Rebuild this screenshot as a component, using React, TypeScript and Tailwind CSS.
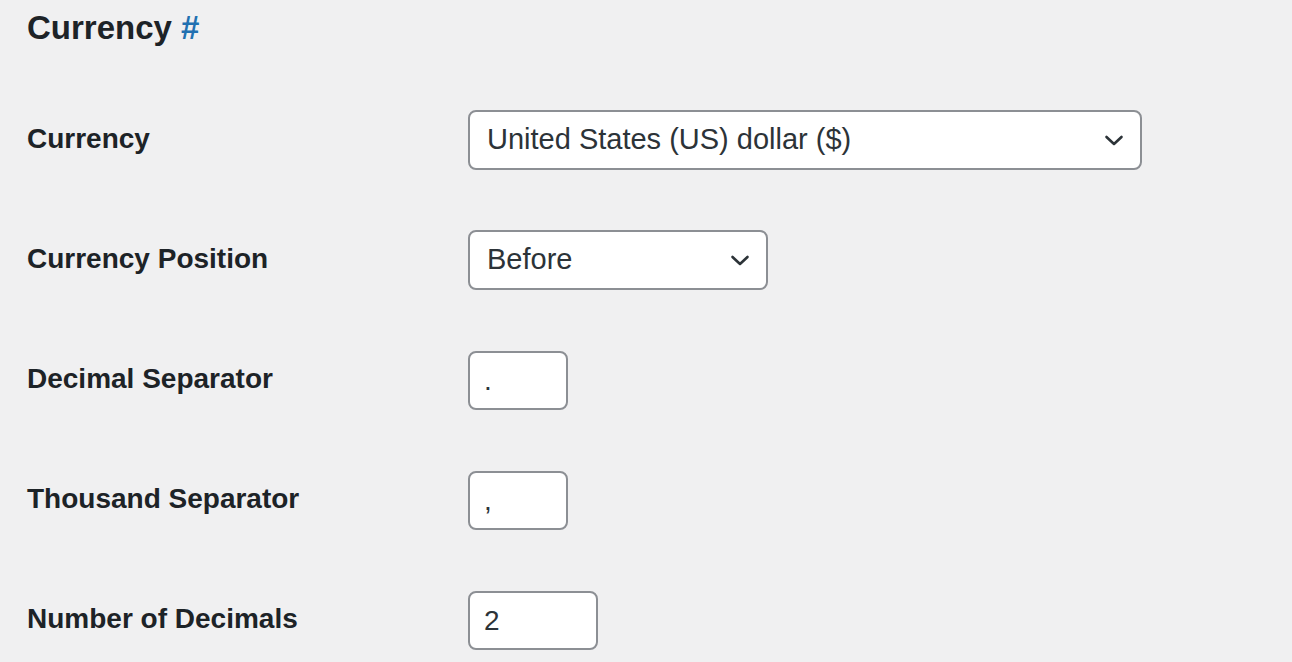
import type { ReactNode } from 'react';

function Chevron() {
  return (
    <svg width="20" height="13" viewBox="0 0 20 13" fill="none" className="shrink-0">
      <path d="M2.5 3 L10 10 L17.5 3" stroke="#2c3338" strokeWidth="2.6" strokeLinecap="round" strokeLinejoin="round" />
    </svg>
  );
}

function SelectBox({ value, width }: { value: string; width: string }) {
  return (
    <div
      className={`${width} h-[60px] flex items-center justify-between pl-[17px] pr-[16px] bg-white border-2 border-[#8c8f94] rounded-[8px] text-[29px] text-[#2c3338]`}
    >
      <span>{value}</span>
      <Chevron />
    </div>
  );
}

function TextBox({ value, width }: { value: string; width: string }) {
  return (
    <input
      readOnly
      value={value}
      className={`${width} h-[59px] pl-[14px] pr-[14px] pt-[2px] bg-white border-2 border-[#8c8f94] rounded-[8px] text-[28px] text-[#2c3338] outline-none`}
    />
  );
}

function Row({ label, children }: { label: string; children: ReactNode }) {
  return (
    <div className="flex items-center h-[60px]">
      <div className="w-[441px] shrink-0 text-[28px] font-bold text-[#1d2327] -mt-[2px]">{label}</div>
      {children}
    </div>
  );
}

export default function App() {
  return (
    <div
      className="min-h-screen w-full bg-[#f0f0f1] pl-[27px] pt-[8px]"
      style={{ fontFamily: "'Liberation Sans', Arial, sans-serif" }}
    >
      <h2 className="text-[33px] leading-[40px] font-bold text-[#1d2327]">
        Currency <span className="text-[#2271b1]">#</span>
      </h2>

      <div className="mt-[62px] flex flex-col gap-[60px]">
        <Row label="Currency">
          <SelectBox value="United States (US) dollar ($)" width="w-[674px]" />
        </Row>
        <Row label="Currency Position">
          <SelectBox value="Before" width="w-[300px]" />
        </Row>
        <Row label="Decimal Separator">
          <TextBox value="." width="w-[100px]" />
        </Row>
        <Row label="Thousand Separator">
          <TextBox value="," width="w-[100px]" />
        </Row>
        <Row label="Number of Decimals">
          <TextBox value="2" width="w-[130px]" />
        </Row>
      </div>
    </div>
  );
}
